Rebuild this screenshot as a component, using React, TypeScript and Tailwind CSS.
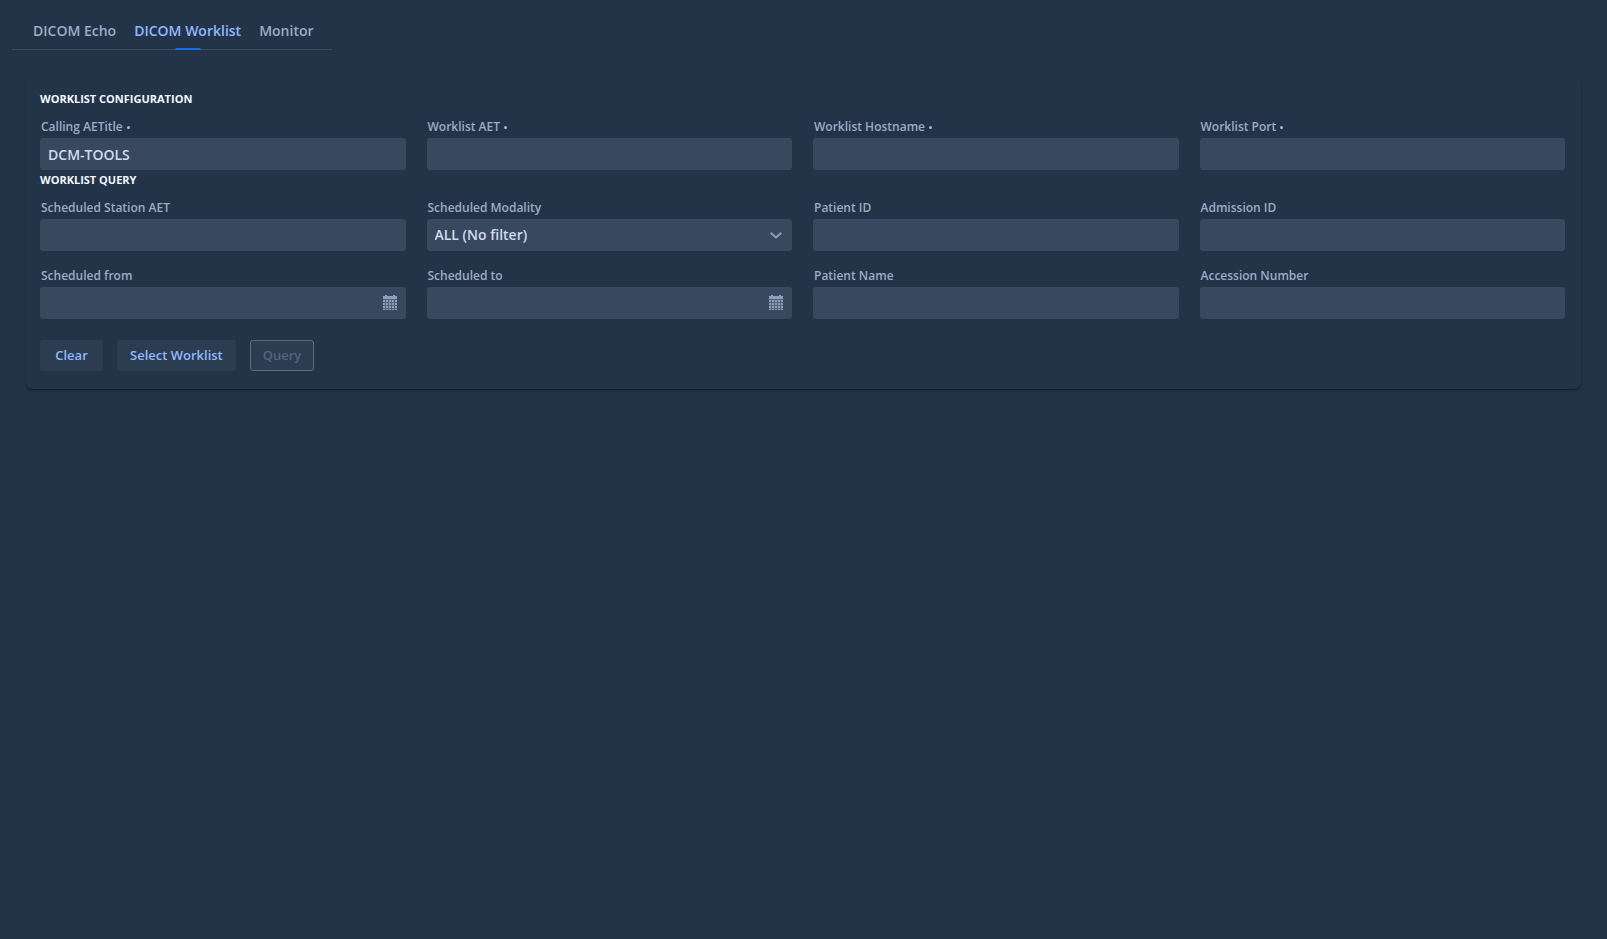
import { useId } from "react";
import type { ReactNode } from "react";

const inputClass =
  "block h-8 w-full appearance-none rounded-[3px] bg-[#38485f] px-2 text-[14px] leading-[18px] font-semibold text-[#cfdcee] outline-none focus:ring-2 focus:ring-[#156de5]";

function Field({
  label,
  required = false,
  value = "",
  icon,
}: {
  label: string;
  required?: boolean;
  value?: string;
  icon?: ReactNode;
}) {
  const id = useId();
  return (
    <div className="flex flex-col gap-0.5">
      <FieldLabel id={id} label={label} required={required} />
      <div className="relative">
        <input id={id} type="text" defaultValue={value} required={required} className={inputClass} />
        {icon}
      </div>
    </div>
  );
}

function FieldLabel({ id, label, required = false }: { id: string; label: string; required?: boolean }) {
  return (
    <label htmlFor={id} className="flex items-center gap-1 pl-px text-[12px] leading-[18px] font-semibold text-[#9cadc5]">
      {label}
      {required && <span aria-hidden="true" className="size-[3px] rounded-full bg-[#90b9ff]" />}
    </label>
  );
}

function CalendarIcon() {
  return (
    <svg viewBox="0 0 16 16" className="pointer-events-none absolute top-2 right-2 size-4 fill-[#8da0ba]" aria-hidden="true">
      <path d="M1 1h2V0h2v1h6V0h2v1h2v3H1z" />
      <path d="M1 4h14v11H1z" opacity="0.3" />
      <path d="M1 5h2v2H1zM4 5h2v2H4zM7 5h2v2H7zM10 5h2v2h-2zM13 5h2v2h-2zM1 8h2v2H1zM4 8h2v2H4zM7 8h2v2H7zM10 8h2v2h-2zM13 8h2v2h-2zM1 11h2v2H1zM4 11h2v2H4zM7 11h2v2H7zM10 11h2v2h-2zM13 11h2v2h-2zM1 14h2v1H1zM4 14h2v1H4zM7 14h2v1H7zM10 14h2v1h-2zM13 14h2v1h-2z" />
    </svg>
  );
}

function ModalitySelect() {
  const id = useId();
  return (
    <div className="flex flex-col gap-0.5">
      <FieldLabel id={id} label="Scheduled Modality" />
      <div className="relative">
        <select id={id} className={inputClass}>
          <option>ALL (No filter)</option>
        </select>
        <svg viewBox="0 0 16 16" className="pointer-events-none absolute top-2 right-2 size-4 fill-none stroke-[#8da0ba] stroke-2" aria-hidden="true">
          <path d="M3.2 6.3 8 10.5l4.8-4.2" strokeLinecap="round" strokeLinejoin="round" />
        </svg>
      </div>
    </div>
  );
}

function Tab({ children, active = false }: { children: string; active?: boolean }) {
  return (
    <button
      type="button"
      role="tab"
      aria-selected={active}
      className={
        active
          ? "relative h-[37px] text-[#90b9ff] after:absolute after:-bottom-px after:left-1/2 after:h-0.5 after:w-[26px] after:-translate-x-1/2 after:rounded-t-sm after:bg-[#156de5]"
          : "h-[37px] text-[#9cadc5]"
      }
    >
      {children}
    </button>
  );
}

function Heading({ children }: { children: string }) {
  return <h2 className="mb-[9px] text-[11px] leading-5 font-bold text-[#f3f8ff]">{children}</h2>;
}

const gridClass = "grid grid-cols-1 gap-x-[21px] gap-y-4 sm:grid-cols-2 lg:grid-cols-4";

export default function App() {
  return (
    <main className="min-h-screen bg-[#233348] px-3 pt-3 font-['Open_Sans','Noto_Sans',sans-serif]">
      <div role="tablist" className="flex w-fit gap-[18px] border-b border-[#384961] pr-[18px] pl-[21px] text-[14px] font-semibold">
        <Tab>DICOM Echo</Tab>
        <Tab active>DICOM Worklist</Tab>
        <Tab>Monitor</Tab>
      </div>

      <form className="mx-3.5 mt-7 rounded-md pt-[11px] pr-4 pb-[18px] pl-3.5 shadow-[0_1px_1px_rgba(10,18,30,0.5),0_2px_4px_rgba(10,18,30,0.08)]">
        <Heading>WORKLIST CONFIGURATION</Heading>
        <div className={gridClass}>
          <Field label="Calling AETitle" value="DCM-TOOLS" required />
          <Field label="Worklist AET" required />
          <Field label="Worklist Hostname" required />
          <Field label="Worklist Port" required />
        </div>
        <Heading>WORKLIST QUERY</Heading>
        <div className={gridClass}>
          <Field label="Scheduled Station AET" />
          <ModalitySelect />
          <Field label="Patient ID" />
          <Field label="Admission ID" />
          <Field label="Scheduled from" icon={<CalendarIcon />} />
          <Field label="Scheduled to" icon={<CalendarIcon />} />
          <Field label="Patient Name" />
          <Field label="Accession Number" />
        </div>
        <div className="mt-[21px] flex gap-3.5 text-[13px] font-semibold">
          <button type="button" className="h-[31px] min-w-[63px] rounded-[3px] bg-[#2c3c51] px-[13px] text-[#90b9ff]">
            Clear
          </button>
          <button type="button" className="h-[31px] rounded-[3px] bg-[#2c3c51] px-[13px] text-[#90b9ff]">
            Select Worklist
          </button>
          <button type="submit" disabled className="h-[31px] rounded-[3px] border border-[#5b6d86] bg-[#2c3c51] px-3 text-[#53657e]">
            Query
          </button>
        </div>
      </form>
    </main>
  );
}
